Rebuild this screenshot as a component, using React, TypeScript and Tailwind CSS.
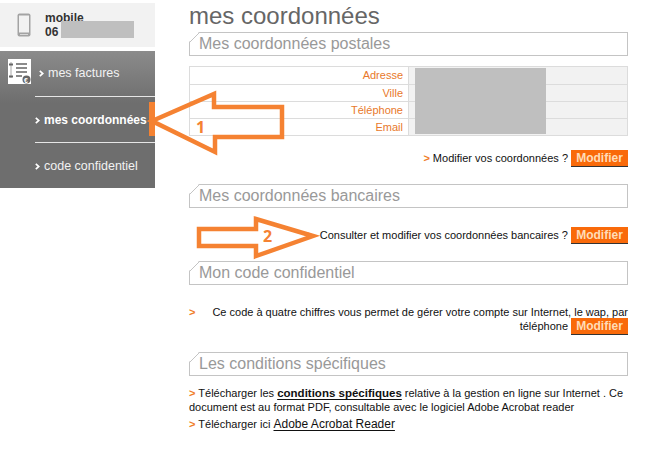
import React from "react";

const OrangeGt = ({ className = "" }: { className?: string }) => (
  <span className={`text-[#f07d28] font-bold ${className}`}>&gt;</span>
);

const Chevron = () => (
  <svg className="mr-[4px] inline-block align-[0px]" width="5" height="7" viewBox="0 0 5 7" fill="none">
    <path d="M0.8 0.8 L3.8 3.5 L0.8 6.2" stroke="#ffffff" strokeWidth="1.7" />
  </svg>
);

const Heading = ({ children, className = "" }: { children: React.ReactNode; className?: string }) => (
  <div className={`relative h-[24px] border border-[#c4c4c4] pl-[9px] text-[16px] leading-[22px] text-[#999999] [clip-path:polygon(10px_0,100%_0,100%_100%,0_100%,0_10px)] ${className}`}>
    <svg className="absolute left-[-1px] top-[-1px]" width="11" height="11" viewBox="0 0 11 11">
      <path d="M0.5 10.5 L10.5 0.5" stroke="#c4c4c4" fill="none" />
    </svg>
    {children}
  </div>
);

const Button = () => (
  <span className="inline-block h-[17px] w-[57px] bg-[#f96a0a] border-b border-[#333] text-center text-[12px] leading-[16px] font-bold text-[#ffdcb8] align-top">
    Modifier
  </span>
);

const rows = ["Adresse", "Ville", "Téléphone", "Email"];

export default function App() {
  return (
    <div className="relative flex h-[462px] w-[653px] overflow-hidden bg-white font-['Liberation_Sans',Arial,sans-serif] text-[11px] text-[#111]">
      <aside className="w-[155px] shrink-0 pt-[3px]">
        <div className="flex h-[44px] items-start bg-[#f2f2f2]">
          <svg className="ml-[17px] mt-[10px]" width="14" height="24" viewBox="0 0 14 24">
            <rect x="0.5" y="0.5" width="13" height="23" rx="2" fill="#a3a3a3" />
            <rect x="2" y="2.5" width="10" height="17" fill="#f2f2f2" />
            <rect x="3" y="21" width="8" height="1" fill="#d8d8d8" />
          </svg>
          <div className="ml-[14px] mt-[8px] text-[12px] leading-[14px] font-bold text-[#333]">
            <div>mobile</div>
            <div className="flex">
              <span>06</span>
              <span className="ml-[3px] mt-[-4px] h-[17px] w-[73px] bg-[#bfbfbf]" />
            </div>
          </div>
        </div>
        <nav className="relative mt-[4px] h-[137px] bg-[linear-gradient(#8b8b8b,#6e6e6e_38%,#6e6e6e)] text-[12.5px] text-[#f2f2f2]">
          <div className="flex h-[45px] items-start">
            <svg className="ml-[8px] mt-[8px]" width="23" height="25" viewBox="0 0 23 25">
              <rect width="23" height="25" fill="#ffffff" />
              <path d="M3 3v16" stroke="#aaa" strokeWidth="1" fill="none" />
              <path d="M1 5.5h4M1 17.5h4" stroke="#666" strokeWidth="2" fill="none" />
              <path d="M8 5h11M8 9h11M8 13h11M8 17h6" stroke="#666" strokeWidth="1.7" fill="none" />
              <circle cx="18.5" cy="20.5" r="4" fill="#666" />
              <text x="16" y="23.5" fontSize="7" fontWeight="bold" fill="#fff">€</text>
            </svg>
            <span className="ml-[8px] mt-[14px] leading-[16px]">
              <Chevron />mes factures
            </span>
          </div>
          <div className="ml-[35px] flex h-[46px] items-center border-t border-[#e6e6e6] text-[12px] pt-[1px] font-bold text-white">
            <span><Chevron />mes coordonnées</span>
          </div>
          <div className="ml-[35px] flex h-[46px] items-center border-t border-[#e6e6e6] pt-[1px] text-[#f2f2f2]">
            <span><Chevron />code confidentiel</span>
          </div>
          <span className="absolute right-0 top-[51px] h-[34px] w-[6px] bg-[#f58232]" />
        </nav>
      </aside>

      <main className="ml-[34px] w-[439px] shrink-0">
        <h1 className="mt-[2px] h-[30px] text-[24px] leading-[28px] font-normal text-[#666666]">mes coordonnées</h1>
        <Heading>Mes coordonnées postales</Heading>

        <div className="mt-[10px] border border-[#dcdcdc] leading-[16px]">
          {rows.map((r, i) => (
            <div key={r} className={`flex h-[17px] ${i ? "border-t border-[#dcdcdc]" : ""}`}>
              <div className="w-[218px] pr-[5px] text-right text-[#e8792b]">{r}</div>
              <div className="flex-1 border-l border-[#dcdcdc] bg-[#f2f2f2]" />
            </div>
          ))}
        </div>

        <div className="mt-[14px] flex h-[17px] justify-end">
          <span className="mr-[3px] leading-[16px]"><OrangeGt /> Modifier vos coordonnées ?</span>
          <Button />
        </div>

        <Heading className="mt-[17px]">Mes coordonnées bancaires</Heading>

        <div className="mt-[19px] flex h-[17px] justify-end">
          <span className="mr-[3px] leading-[16px]"><OrangeGt className="mr-[3px]" /> Consulter et modifier vos coordonnées bancaires ?</span>
          <Button />
        </div>

        <Heading className="mt-[17px]">Mon code confidentiel</Heading>

        <div className="mt-[20px]">
          <div className="flex h-[13px] justify-between leading-[14px]">
            <OrangeGt />
            <span>Ce code à quatre chiffres vous permet de gérer votre compte sur Internet, le wap, par</span>
          </div>
          <div className="flex h-[17px] justify-end">
            <span className="mr-[3px] leading-[16px]">téléphone</span>
            <Button />
          </div>
        </div>

        <Heading className="mt-[17px]">Les conditions spécifiques</Heading>

        <div className="mt-[10px] leading-[14px]">
          <p>
            <OrangeGt /> Télécharger les <a className="font-bold underline underline-offset-2 text-[11.5px]">conditions spécifiques</a> relative à la gestion en ligne sur Internet . Ce document est au format PDF, consultable avec le logiciel Adobe Acrobat reader
          </p>
          <p className="mt-[3px]">
            <OrangeGt /> Télécharger ici <a className="text-[12px] underline underline-offset-2">Adobe Acrobat Reader</a>
          </p>
        </div>
      </main>

      <span className="absolute left-[415px] top-[68px] h-[66px] w-[131px] bg-[#bfbfbf]" />

      <svg className="absolute left-0 top-0" width="653" height="462" viewBox="0 0 653 462" fill="none">
        <path d="M152 121 L214 94 L214 107 L282 107 L282 137 L215 137 L215 152 Z" stroke="#f58232" strokeWidth="4.5" strokeLinejoin="miter" />
        <path d="M199 229 L256 229 L256 219 L313 236 L256 256 L256 246 L199 246 Z" stroke="#f58232" strokeWidth="4.5" strokeLinejoin="miter" />
      </svg>
      <span className="absolute left-[196px] top-[118px] text-[16px] leading-[18px] font-bold text-[#f58232] font-['Noto_Sans',sans-serif]">1</span>
      <span className="absolute left-[263px] top-[227px] text-[16px] leading-[18px] font-bold text-[#f58232] font-['Noto_Sans',sans-serif]">2</span>
    </div>
  );
}
